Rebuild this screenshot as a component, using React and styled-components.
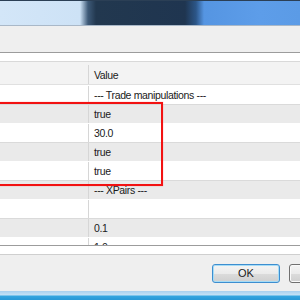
import styled, { createGlobalStyle } from "styled-components";

const Global = createGlobalStyle`
  html, body { margin: 0; padding: 0; }
  body {
    font-family: "Liberation Sans", Arial, sans-serif;
    font-size: 10.5px;
    color: #1a1a1a;
    background: #f0f0f0;
  }
`;

const Window = styled.div`
  width: 300px;
  height: 300px;
  overflow: hidden;
  display: flex;
  flex-direction: column;
  background: #f0f0f0;
`;

const TitleBar = styled.div`
  height: 24px;
  flex: none;
  border-top: 1px solid #2b3f55;
  border-bottom: 1px solid #a9b8c8;
  background: linear-gradient(
    90deg,
    #d3e6f8 0px,
    #cde2f6 80px,
    #3e5a78 88px,
    #22384f 96px,
    #1f3550 185px,
    #2c5688 196px,
    #5595e2 204px,
    #5d9de9 260px,
    #5b9be6 300px
  );
`;

const TopPanel = styled.div`
  height: 26px;
  flex: none;
  background: #efefef;
`;

const ListFrame = styled.div`
  position: relative;
  height: 193px;
  flex: none;
  border-top: 1px solid #9c9c9c;
  background: #fff;
  padding-top: 8px;
  box-sizing: border-box;
  overflow: hidden;
`;

const Row = styled.div`
  display: grid;
  grid-template-columns: 89px 1fr;
  height: ${(p) => p.$h || 19}px;
  box-sizing: border-box;
  background: ${(p) => (p.$alt ? "#eaeaea" : "#ffffff")};
  border-top: 1px solid ${(p) => (p.$alt ? "#dadada" : "#ffffff")};
`;

const Header = styled(Row)`
  background: #f3f3f3;
  border-top: 1px solid #d9d9d9;
  border-bottom: 1px solid #e0e0e0;
  padding-top: 3px;
`;

const Cell = styled.div`
  display: flex;
  align-items: center;
  padding-left: ${(p) => (p.$first ? 0 : 5)}px;
  border-right: ${(p) => (p.$first ? "1px solid #d6d6d6" : "none")};
  white-space: nowrap;
  letter-spacing: -0.35px;
`;

const Highlight = styled.div`
  position: absolute;
  left: -6px;
  top: 49px;
  width: 165px;
  height: 80px;
  border: 2px solid #f21212;
  box-shadow: 0 0 1px rgba(255, 80, 80, 0.6);
  pointer-events: none;
`;

const Spacer = styled.div`
  height: 8px;
  flex: none;
  border-top: 1px solid #9c9c9c;
  background: #fff;
`;

const ButtonBar = styled.div`
  height: 36px;
  flex: none;
  background: #efefef;
  display: flex;
  align-items: center;
  padding-left: 212px;
  gap: 9px;
  border-top: 1px solid #cfcfcf;
`;

const Button = styled.div`
  flex: none;
  width: ${(p) => p.$w || 68}px;
  height: 19px;
  box-sizing: border-box;
  border-radius: 3px;
  border: 1px solid ${(p) => (p.$default ? "#3d8ed0" : "#707070")};
  box-shadow: ${(p) => (p.$default ? "inset 0 0 0 1px #a6dcf6" : "inset 0 0 0 1px #fafafa")};
  background: linear-gradient(#f4f4f4 0%, #ebebeb 50%, #dcdcdc 51%, #cfcfcf 100%);
  display: flex;
  align-items: center;
  justify-content: center;
  font-size: 11px;
`;

const TaskStrip = styled.div`
  flex: 1;
  background: linear-gradient(#a9d0ee 0px, #c5e2f6 4px, #36a6e0 5px, #2a9ad8 8px);
`;

const rows = [
  { v: "--- Trade manipulations ---" },
  { v: "true", alt: true },
  { v: "30.0" },
  { v: "true", alt: true },
  { v: "true" },
  { v: "--- XPairs ---", alt: true },
  { v: "" },
  { v: "0.1", alt: true },
  { v: "1.0" },
];

export default function App() {
  return (
    <>
      <Global />
      <Window>
        <TitleBar />
        <TopPanel />
        <ListFrame>
          <Header $h={24}>
            <Cell $first />
            <Cell>Value</Cell>
          </Header>
          {rows.map((r, i) => (
            <Row key={i} $alt={r.alt}>
              <Cell $first />
              <Cell>{r.v}</Cell>
            </Row>
          ))}
          <Highlight />
        </ListFrame>
        <Spacer />
        <ButtonBar>
          <Button $default>OK</Button>
          <Button $w={20} />
        </ButtonBar>
        <TaskStrip />
      </Window>
    </>
  );
}
